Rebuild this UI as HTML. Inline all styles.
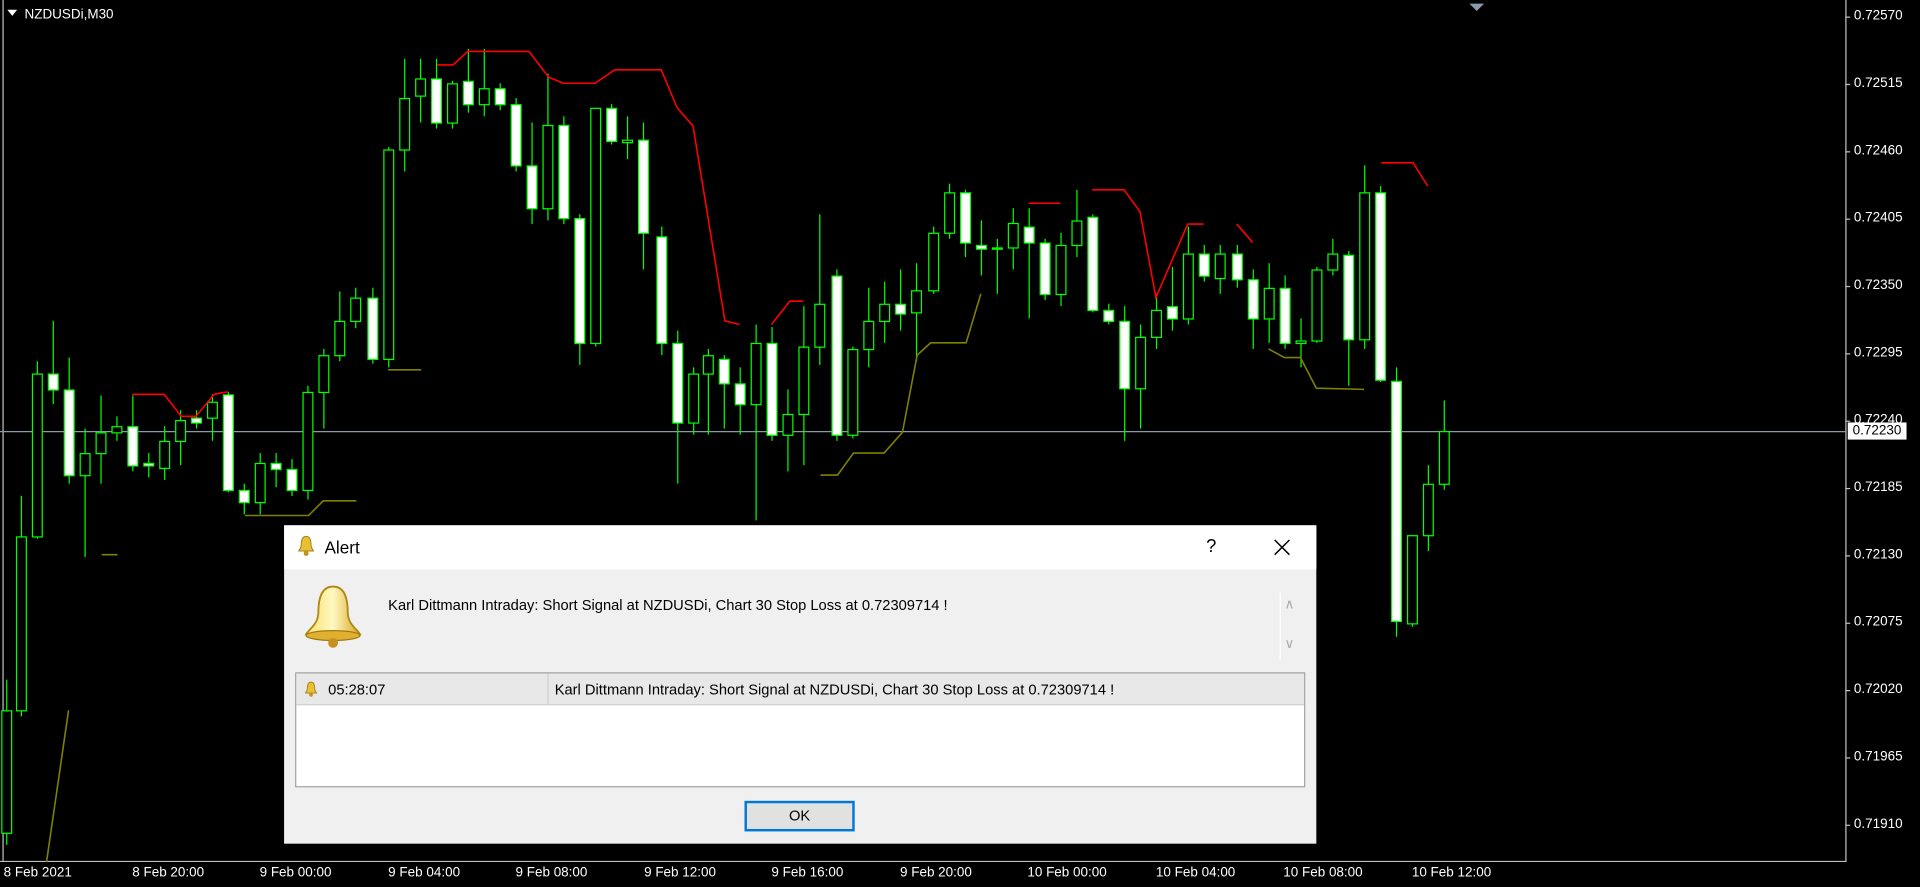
<!DOCTYPE html>
<html><head><meta charset="utf-8">
<style>
html,body{margin:0;padding:0;background:#000;overflow:hidden}
#wrap{position:absolute;left:0;top:0;width:1568px;height:724px;transform:scale(1.22449);transform-origin:0 0;background:#000;font-family:"Liberation Sans",sans-serif}
.ax{position:absolute;color:#fff;font-size:11px;font-family:"Liberation Sans",sans-serif}
#dlg{position:absolute;left:232px;top:429px;width:843px;height:260px;background:#f0f0f0}
#tb{position:absolute;left:0;top:0;width:843px;height:36px;background:#fff}
</style></head><body>
<div id="wrap">
<svg id="chart" width="1568" height="724" style="position:absolute;left:0;top:0">
<g stroke="#c0c0c0" stroke-width="1" fill="none">
<line x1="2.5" y1="0" x2="2.5" y2="704"/>
<line x1="1507.5" y1="0" x2="1507.5" y2="704"/>
<line x1="0" y1="703.5" x2="1508" y2="703.5"/>
</g>
<line x1="0" y1="352.5" x2="1507" y2="352.5" stroke="#8a9aaa" stroke-width="1"/>
<polygon points="1200,3 1212,3 1206,9" fill="#8a9aaa"/>
<g id="cd"></g>
<g fill="none" stroke="#ff0000" stroke-width="1.3">
<polyline points="108,322 134,322 148,340 160,340 175,322 186,320"/>
<polyline points="357,53 370,53 382,42 432,42 448,63 460,68 486,68 502,57 540,57 553,88 566,103 592,262 604,265"/>
<polyline points="630,265 645,246 656,246"/>
<polyline points="840,166 866,166"/>
<polyline points="892,155 918,155 931,173 944,243 970,183 983,183"/>
<polyline points="1010,183 1023,198"/>
<polyline points="1128,133 1154,133 1166,152"/>
</g>
<g fill="none" stroke="#808000" stroke-width="1.3">
<polyline points="83,453 96,453"/>
<polyline points="317,302 344,302"/>
<polyline points="200,421 252,421 264,409 291,409"/>
<polyline points="38,704 56,580"/>
<polyline points="670,388 684,388 697,370 722,370 737,353 749,290 760,280 789,280 801,240"/>
<polyline points="1036,285 1049,292 1062,292 1075,317 1114,318"/>
</g>
<g stroke="#c0c0c0">
<line x1="1507" y1="14" x2="1511" y2="14"/><line x1="1507" y1="69" x2="1511" y2="69"/><line x1="1507" y1="124" x2="1511" y2="124"/><line x1="1507" y1="179" x2="1511" y2="179"/><line x1="1507" y1="234" x2="1511" y2="234"/><line x1="1507" y1="289" x2="1511" y2="289"/><line x1="1507" y1="344" x2="1511" y2="344"/><line x1="1507" y1="399" x2="1511" y2="399"/><line x1="1507" y1="454" x2="1511" y2="454"/><line x1="1507" y1="509" x2="1511" y2="509"/><line x1="1507" y1="564" x2="1511" y2="564"/><line x1="1507" y1="619" x2="1511" y2="619"/><line x1="1507" y1="674" x2="1511" y2="674"/>
</g>
<polygon points="6,8 14,8 10,13" fill="#fff"/>
</svg>
<div class="ax" style="left:20px;top:6px">NZDUSDi,M30</div>
<div class="ax" style="left:1514px;top:7px">0.72570</div>
<div class="ax" style="left:1514px;top:62px">0.72515</div>
<div class="ax" style="left:1514px;top:117px">0.72460</div>
<div class="ax" style="left:1514px;top:172px">0.72405</div>
<div class="ax" style="left:1514px;top:227px">0.72350</div>
<div class="ax" style="left:1514px;top:282px">0.72295</div>
<div class="ax" style="left:1514px;top:337px">0.72240</div>
<div class="ax" style="left:1509px;top:345px;background:#fff;color:#000;padding:1px 4px 1px 4px">0.72230</div>
<div class="ax" style="left:1514px;top:392px">0.72185</div>
<div class="ax" style="left:1514px;top:447px">0.72130</div>
<div class="ax" style="left:1514px;top:502px">0.72075</div>
<div class="ax" style="left:1514px;top:557px">0.72020</div>
<div class="ax" style="left:1514px;top:612px">0.71965</div>
<div class="ax" style="left:1514px;top:667px">0.71910</div>
<div class="ax" style="left:3px;top:707px">8 Feb 2021</div>
<div class="ax" style="left:108px;top:707px">8 Feb 20:00</div>
<div class="ax" style="left:212px;top:707px">9 Feb 00:00</div>
<div class="ax" style="left:317px;top:707px">9 Feb 04:00</div>
<div class="ax" style="left:421px;top:707px">9 Feb 08:00</div>
<div class="ax" style="left:526px;top:707px">9 Feb 12:00</div>
<div class="ax" style="left:630px;top:707px">9 Feb 16:00</div>
<div class="ax" style="left:735px;top:707px">9 Feb 20:00</div>
<div class="ax" style="left:839px;top:707px">10 Feb 00:00</div>
<div class="ax" style="left:944px;top:707px">10 Feb 04:00</div>
<div class="ax" style="left:1048px;top:707px">10 Feb 08:00</div>
<div class="ax" style="left:1153px;top:707px">10 Feb 12:00</div>

<div id="dlg">
 <div id="tb">
  <svg width="16" height="18" style="position:absolute;left:10px;top:8px" viewBox="0 0 16 18"><path d="M8 1 C5 1 4 4 4 8 C4 11 2 12 2 13 L14 13 C14 12 12 11 12 8 C12 4 11 1 8 1Z" fill="#e8c030" stroke="#a08020" stroke-width="0.8"/><circle cx="8" cy="15" r="2" fill="#c09020"/></svg>
  <div style="position:absolute;left:33px;top:10px;font-size:14px;color:#000">Alert</div>
  <div style="position:absolute;left:753px;top:9px;font-size:15px;color:#000">?</div>
  <svg width="14" height="14" style="position:absolute;left:808px;top:11px"><path d="M1 1 L13 13 M13 1 L1 13" stroke="#000" stroke-width="1.2"/></svg>
 </div>
 <svg width="52" height="56" style="position:absolute;left:14px;top:47px" viewBox="0 0 52 56">
  <defs><linearGradient id="g" x1="0" x2="1"><stop offset="0" stop-color="#f8e070"/><stop offset="0.5" stop-color="#fff8c0"/><stop offset="1" stop-color="#d8a820"/></linearGradient></defs>
  <path d="M26 3 C17 3 14 12 14 24 C14 34 6 38 4 42 L48 42 C46 38 38 34 38 24 C38 12 35 3 26 3Z" fill="url(#g)" stroke="#b08818" stroke-width="1.5"/>
  <ellipse cx="26" cy="43" rx="22" ry="4" fill="#e0b030" stroke="#a07810"/>
  <circle cx="26" cy="49" r="4" fill="#c89020"/>
 </svg>
 <div style="position:absolute;left:85px;top:58px;font-size:12px;color:#000">Karl Dittmann Intraday: Short Signal at NZDUSDi, Chart 30 Stop Loss at 0.72309714 !</div>
 <div style="position:absolute;left:813px;top:55px;width:1px;height:55px;background:#fff"></div>
 <div style="position:absolute;left:817px;top:58px;font-size:11px;color:#aaa">&#x2227;</div>
 <div style="position:absolute;left:817px;top:90px;font-size:11px;color:#aaa">&#x2228;</div>
 <div style="position:absolute;left:9px;top:120px;width:823px;height:92px;background:#fff;border:1px solid #a0a0a0">
  <div style="position:absolute;left:0;top:0;width:823px;height:25px;background:#e8e8e8;border-bottom:1px solid #d0d0d0"></div>
  <div style="position:absolute;left:205px;top:0;width:1px;height:25px;background:#d0d0d0"></div>
  <svg width="12" height="16" style="position:absolute;left:6px;top:5px" viewBox="0 0 16 18"><path d="M8 1 C5 1 4 4 4 8 C4 11 2 12 2 13 L14 13 C14 12 12 11 12 8 C12 4 11 1 8 1Z" fill="#e8c030" stroke="#a08020"/><circle cx="8" cy="15" r="2" fill="#c09020"/></svg>
  <div style="position:absolute;left:26px;top:6px;font-size:12px;color:#000">05:28:07</div>
  <div style="position:absolute;left:211px;top:6px;font-size:12px;color:#000">Karl Dittmann Intraday: Short Signal at NZDUSDi, Chart 30 Stop Loss at 0.72309714 !</div>
 </div>
 <div style="position:absolute;left:376px;top:225px;width:86px;height:21px;border:2px solid #0078d7;background:#e1e1e1;box-sizing:content-box;text-align:center;line-height:21px;font-size:12px;color:#000">OK</div>
</div>
</div>
<script>
var c=[[5,580,680,555,690,1],[17,438,580,405,585,1],[30,305,438,295,440,1],[43,305,318,262,330,0],[56,318,388,292,395,0],[69,370,388,350,455,1],[82,353,370,323,395,1],[95,348,353,340,360,1],[108,348,380,323,385,0],[121,378,380,370,390,0],[134,360,382,348,392,1],[147,343,360,335,380,1],[160,341,345,335,350,0],[173,328,341,322,360,1],[186,322,400,320,402,0],[199,400,410,395,420,0],[212,378,410,370,420,1],[225,378,383,370,398,0],[238,383,400,375,405,0],[251,320,400,315,408,1],[264,290,320,285,350,1],[277,262,290,238,295,1],[290,243,262,235,268,1],[304,243,293,235,297,0],[317,122,293,120,300,1],[330,80,122,48,140,1],[343,64,78,48,100,1],[356,64,100,48,105,0],[369,68,100,66,105,1],[382,66,85,40,92,0],[395,72,85,40,95,1],[408,72,85,68,90,0],[421,85,135,80,140,0],[434,135,170,100,183,0],[447,102,170,60,180,1],[460,102,178,95,183,0],[473,178,280,175,298,0],[486,88,280,88,283,1],[499,88,115,85,118,0],[512,114,116,95,130,1],[525,114,190,100,220,0],[540,193,280,185,290,0],[553,280,345,270,395,0],[566,305,345,300,355,1],[578,290,305,285,355,1],[591,293,313,290,350,0],[604,313,330,300,355,0],[617,280,330,265,425,1],[630,280,355,267,360,0],[643,338,355,318,385,1],[656,283,338,250,380,1],[669,248,283,175,298,1],[683,225,355,220,360,0],[696,285,355,283,358,1],[709,262,285,235,300,1],[722,248,262,230,280,1],[735,248,256,220,270,0],[748,237,255,215,295,1],[762,190,237,185,240,1],[775,157,190,150,195,1],[788,157,198,155,210,0],[801,200,203,180,225,0],[814,202,203,195,240,1],[827,182,202,170,220,1],[840,185,198,170,260,0],[853,198,240,195,245,0],[866,200,240,190,250,1],[879,180,200,155,210,1],[892,177,253,175,255,0],[905,253,262,248,265,0],[918,262,317,250,360,0],[931,275,317,265,350,1],[944,253,275,240,285,1],[957,250,260,218,270,0],[970,207,260,185,265,1],[983,207,225,200,230,0],[996,207,227,200,240,1],[1010,207,228,200,235,0],[1023,228,260,220,285,0],[1036,235,260,215,280,1],[1049,235,280,225,285,0],[1062,278,280,260,300,1],[1075,220,278,218,280,1],[1088,207,220,195,225,1],[1101,208,277,205,315,0],[1114,157,277,135,285,1],[1127,157,310,152,312,0],[1140,311,507,300,520,0],[1153,437,509,437,512,1],[1166,395,437,380,450,1],[1179,352,395,327,400,1]];
var s='';c.forEach(function(d){var x=d[0],t=Math.min(d[1],d[2]),b=Math.max(d[1],d[2]),h=Math.max(b-t,1);
s+='<line x1="'+(x+.5)+'" y1="'+d[3]+'" x2="'+(x+.5)+'" y2="'+d[4]+'" stroke="#00ff00" stroke-width="1"/>';
s+='<rect x="'+(x-3.5)+'" y="'+(t+.5)+'" width="8" height="'+h+'" fill="'+(d[5]?'#000':'#fff')+'" stroke="#00ff00" stroke-width="1"/>';});
document.getElementById('cd').innerHTML=s;
</script>
</body></html>
